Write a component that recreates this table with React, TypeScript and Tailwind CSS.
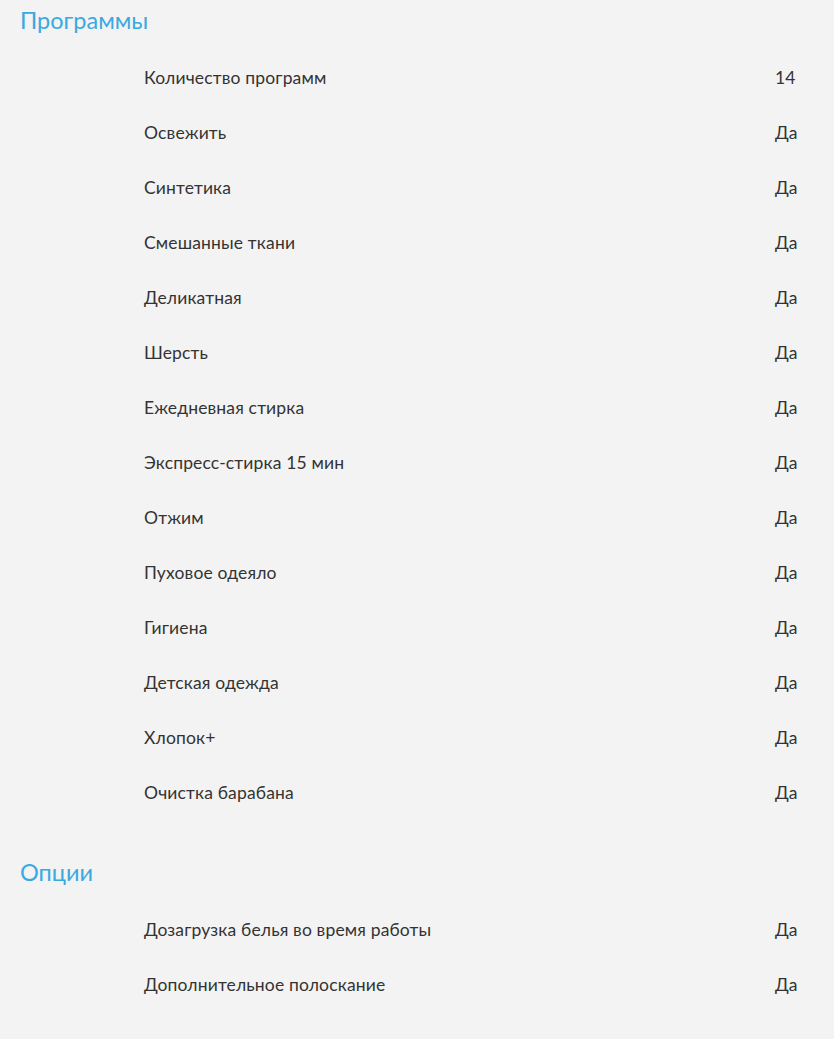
import React from "react";

type Spec = { label: string; value: string };

const programs: Spec[] = [
  { label: "Количество программ", value: "14" },
  { label: "Освежить", value: "Да" },
  { label: "Синтетика", value: "Да" },
  { label: "Смешанные ткани", value: "Да" },
  { label: "Деликатная", value: "Да" },
  { label: "Шерсть", value: "Да" },
  { label: "Ежедневная стирка", value: "Да" },
  { label: "Экспресс-стирка 15 мин", value: "Да" },
  { label: "Отжим", value: "Да" },
  { label: "Пуховое одеяло", value: "Да" },
  { label: "Гигиена", value: "Да" },
  { label: "Детская одежда", value: "Да" },
  { label: "Хлопок+", value: "Да" },
  { label: "Очистка барабана", value: "Да" },
];

const options: Spec[] = [
  { label: "Дозагрузка белья во время работы", value: "Да" },
  { label: "Дополнительное полоскание", value: "Да" },
];

function SpecGroup({ title, items, className = "" }: { title: string; items: Spec[]; className?: string }) {
  return (
    <section className={className}>
      <h2 className="pl-5 text-[23.5px] leading-8 text-[#3aa9e0]">{title}</h2>
      <ul className="mt-[15px]">
        {items.map((item) => (
          <li
            key={item.label}
            className="grid h-[55px] grid-cols-[1fr_59px] items-center pl-[144px] text-[17.5px] tracking-[0.15px] text-[#333333]"
          >
            <span>{item.label}</span>
            <span>{item.value}</span>
          </li>
        ))}
      </ul>
    </section>
  );
}

export default function App() {
  return (
    <div className="min-h-[1039px] bg-[#f3f3f3] pt-1 font-['Lato',sans-serif]">
      <SpecGroup title="Программы" items={programs} />
      <SpecGroup title="Опции" items={options} className="mt-[35px]" />
    </div>
  );
}
